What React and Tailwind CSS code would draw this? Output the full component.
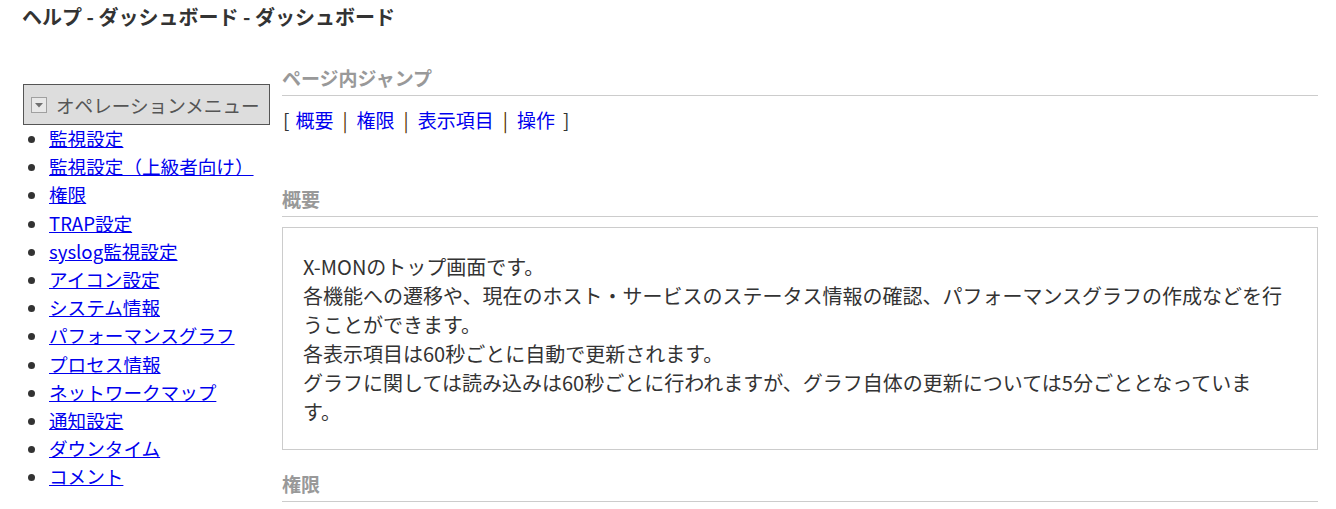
const menuItems = [
  "監視設定",
  "監視設定（上級者向け）",
  "権限",
  "TRAP設定",
  "syslog監視設定",
  "アイコン設定",
  "システム情報",
  "パフォーマンスグラフ",
  "プロセス情報",
  "ネットワークマップ",
  "通知設定",
  "ダウンタイム",
  "コメント",
];

const jumps = ["概要", "権限", "表示項目", "操作"];

function SectionTitle({ children }) {
  return (
    <h3 className="text-[19px] leading-[26px] font-bold text-[#999] pb-[4px] border-b border-[#ccc]">
      {children}
    </h3>
  );
}

function DropIcon() {
  return (
    <svg width="16" height="16" viewBox="0 0 16 16" className="shrink-0 w-[16px] h-[16px]">
      <rect x="0.5" y="0.5" width="15" height="15" fill="#e8e8e8" stroke="#a0a0a0" />
      <path d="M4 6 L12 6 L8 10.5 Z" fill="#707070" />
    </svg>
  );
}

export default function App() {
  return (
    <div
      className="bg-white text-[#333] min-h-[509px] pl-[22px] pr-[18px] pt-[4px]"
      style={{ fontFamily: '"Noto Sans CJK JP", "Noto Sans", sans-serif' }}
    >
      <h1 className="text-[20px] leading-[26px] font-bold text-[#333]">
        ヘルプ - ダッシュボード - ダッシュボード
      </h1>

      <div className="flex gap-[12px] mt-[35px]">
        {/* sidebar */}
        <div className="w-[248px] shrink-0 pt-[19px] pl-[1px]">
          <div className="h-[41px] flex items-center gap-[9px] pl-[7px] bg-[#ddd] border border-[#555] text-[18.6px] text-[#555]">
            <DropIcon />
            <span>オペレーションメニュー</span>
          </div>
          <ul className="list-disc pl-[26px] text-[18.6px] leading-[28.2px] -mt-[1px] marker:text-[#333]">
            {menuItems.map((m) => (
              <li key={m}>
                <a href="#" className="text-[#0000ee] underline">{m}</a>
              </li>
            ))}
          </ul>
        </div>

        {/* content */}
        <div className="flex-1">
          <SectionTitle>ページ内ジャンプ</SectionTitle>
          <div className="mt-[10px] text-[19px] leading-[28px] pl-[1px] flex items-center">
            <span className="mr-[6px]">[</span>
            {jumps.map((j, i) => (
              <span key={j} className="flex items-center">
                <a href="#" className="text-[#0000ee]">{j}</a>
                {i < jumps.length - 1 && <span className="mx-[9px] text-[#553300]">|</span>}
              </span>
            ))}
            <span className="ml-[8px]">]</span>
          </div>

          <div className="mt-[52px]">
            <SectionTitle>概要</SectionTitle>
          </div>
          <div className="mt-[10px] border border-[#ccc] px-[20px] pt-[24px] pb-[23px] text-[20px] leading-[29px] text-[#333]">
            <p>X-MONのトップ画面です。</p>
            <p>各機能への遷移や、現在のホスト・サービスのステータス情報の確認、パフォーマンスグラフの作成などを行うことができます。</p>
            <p>各表示項目は60秒ごとに自動で更新されます。</p>
            <p>
              グラフに関しては読み込みは60秒ごとに行われますが、グラフ自体の更新については5分ごととなっていま
              <br />
              す。
            </p>
          </div>

          <div className="mt-[21px]">
            <SectionTitle>権限</SectionTitle>
          </div>
        </div>
      </div>
    </div>
  );
}
